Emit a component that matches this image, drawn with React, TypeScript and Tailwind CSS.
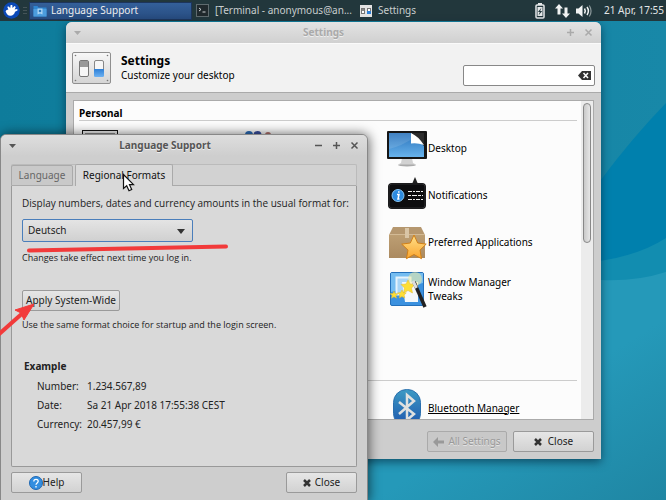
import React from 'react';
import { clsx } from 'clsx';

const example = [
    { label: 'Number:', value: '1.234.567,89' },
    { label: 'Date:', value: 'Sa 21 Apr 2018 17:55:38 CEST' },
    { label: 'Currency:', value: '20.457,99 €' },
];

const MouseLogo = () => (
    <svg viewBox="0 0 17 17" className="w-[17px] h-[17px]">
        <circle cx="8.5" cy="8.5" r="8.3" fill="#0b4ab8" />
        <path d="M2.6 9.5c.5-1.300 1.600-1.800 2.800-1.900L4.200 4.800l1.700-.4 1.300 1.900.4-3.300 1.700.1.200 3 2-2.200 1.300 1-1.200 2.600 2.700-.4.200 1.400-2.500 1.300c-.2 2.300-2.200 4-4.700 4-2.400 0-3.200-1.200-4.700-4.300z" fill="#fff" />
    </svg>
);

const FolderIcon = () => (
    <svg viewBox="0 0 14 12" className="w-3.5 h-3">
        <path d="M.5 1h4l1 1.500h8v9H.5z" fill="#2f86d0" />
        <path d="M.5 4h13v7.500H.5z" fill="#4c9ddd" />
        <path d="M4.500 3.500h5v6l-2.500-1-2.500 1z" fill="#a9d3f3" />
        <circle cx="7" cy="6" r="1.300" fill="#2b78bb" />
    </svg>
);

const TerminalIcon = () => (
    <svg viewBox="0 0 13 13" className="w-[13px] h-[13px]">
        <rect x=".5" y=".5" width="12" height="12" fill="#20292d" stroke="#5f6b6f" />
        <path d="M3 4l2 1.500L3 7M6.500 8h3" fill="none" stroke="#cfd4d6" />
    </svg>
);

const SmallSwitchesIcon = () => (
    <svg viewBox="0 0 12 12" className="w-3 h-3">
        <path d="M0 0h12v12H0z" fill="#e4e4e4" />
        <rect x="1.500" y="3.500" width="3" height="5" fill="#fff" stroke="#777" />
        <path d="M2 4h2v2H2z" fill="#888" />
        <rect x="7.500" y="3.500" width="3" height="5" fill="#fff" stroke="#777" />
        <path d="M7 6h4v3H7z" fill="#2f80d6" />
    </svg>
);

const SwitchesIcon = () => (
    <svg viewBox="0 0 39 32" className="h-8 w-[39px]">
        <defs>
            <linearGradient id="plate" x1="0" y1="0" x2="0" y2="1">
                <stop offset="0" stopColor="#f8f8f8" />
                <stop offset="1" stopColor="#d4d4d4" />
            </linearGradient>
            <linearGradient id="blueSwitch" x1="0" y1="0" x2="0" y2="1">
                <stop offset="0" stopColor="#2e7fd6" />
                <stop offset="1" stopColor="#6db2f2" />
            </linearGradient>
        </defs>
        <rect x=".5" y=".5" width="38" height="31" rx="1.500" fill="url(#plate)" stroke="#8f8f8f" />
        <g fill="#777">
            <circle cx="3.500" cy="3.500" r=".8" />
            <circle cx="35.500" cy="3.500" r=".8" />
            <circle cx="3.500" cy="28.500" r=".8" />
            <circle cx="35.500" cy="28.500" r=".8" />
        </g>
        <rect x="7.500" y="8.500" width="9" height="16" rx="1.500" fill="#f7f7f7" stroke="#777" />
        <path d="M8 9h8v6H8z" fill="#999" />
        <rect x="22.500" y="8.500" width="9" height="16" rx="1.500" fill="#f7f7f7" stroke="#888" />
        <path d="M22 17h10v6.500q0 1.500-1.500 1.500h-7q-1.500 0-1.500-1.500z" fill="url(#blueSwitch)" />
    </svg>
);

const BatteryIcon = () => (
    <svg viewBox="0 0 10 17" className="w-2.5 h-[17px]">
        <path d="M3 1h4v2H3z" fill="#e6e9ea" />
        <rect x="1" y="3" width="8" height="13" rx="1" fill="#22373c" stroke="#e6e9ea" strokeWidth="1.500" />
        <path d="M2.500 5h5v9h-5z" fill="#e6e9ea" />
        <path d="M6.500 5.500L3 10h1.800L3.500 13.500 7.200 9H5.200z" fill="#22373c" />
    </svg>
);

const NetworkIcon = () => (
    <svg viewBox="0 0 15 14" className="w-[15px] h-3.5">
        <path d="M4 0l4 4.500H5.500v6h-3v-6H0zM11 14l4-4.500h-2.500v-6h-3v6H7z" fill="#f1f3f3" />
    </svg>
);

const VolumeIcon = () => (
    <svg viewBox="0 0 16 14" className="w-4 h-3.5">
        <path d="M0 4.500h2.500L6.500 1v12L2.500 9.500H0z" fill="#f1f3f3" />
        <path d="M8.500 4.500q1.600 2.500 0 5M11 3q2.800 4 0 8" fill="none" stroke="#f1f3f3" strokeWidth="1.500" />
        <path d="M13.300 1.500q3.500 5.500 0 11" fill="none" stroke="#8b979a" strokeWidth="1.200" />
    </svg>
);

const DesktopIcon = () => (
    <svg viewBox="0 0 40 40" className="w-10 h-10">
        <defs>
            <linearGradient id="screen" x1="0" y1="0" x2="0" y2="1">
                <stop offset="0" stopColor="#2871ba" />
                <stop offset="1" stopColor="#68b3ec" />
            </linearGradient>
            <linearGradient id="fold" x1="1" y1="0" x2="0" y2="1">
                <stop offset="0" stopColor="#d0d0d0" />
                <stop offset=".5" stopColor="#fff" />
            </linearGradient>
        </defs>
        <ellipse cx="20" cy="37" rx="9" ry="1.500" fill="#aaa" />
        <path d="M15 30h10l1 5 3 1.500H11l3-1.500z" fill="#d2d2d2" />
        <rect x="0" y="3" width="40" height="28" rx="1" fill="#161616" />
        <path d="M2 5h22l13 13v11H2z" fill="url(#screen)" />
        <path d="M2 5h22l4 4Q15 18 2 21z" fill="#fff" opacity=".12" />
        <path d="M25 5h12v11z" fill="#2c2c2c" />
        <path d="M24 5Q31 8 37 17Q30 14.500 24 15.500z" fill="url(#fold)" />
    </svg>
);

const NotificationsIcon = () => (
    <svg viewBox="0 0 40 40" className="w-10 h-10">
        <path d="M25 9l3-7 3 7z" fill="#222" />
        <rect x="1" y="8" width="38" height="26" rx="4" fill="#0d0d0f" />
        <rect x="2" y="9" width="36" height="24" rx="3" fill="none" stroke="#2c2c2e" />
        <circle cx="11" cy="20.500" r="6" fill="#2d8be0" stroke="#8bc8f6" />
        <path d="M10 19.500h2l-1 4.500h1.500M11.800 16.300v1.400" fill="none" stroke="#fff" strokeWidth="1.500" />
        <g stroke="#f0f0f0">
            <path d="M21 16.500h15" strokeDasharray="4 1 2 1" />
            <path d="M21 20.500h15" strokeDasharray="3 1 5 1" />
            <path d="M21 24.500h15" strokeDasharray="4 1 2 1" />
        </g>
    </svg>
);

const PackageIcon = () => (
    <svg viewBox="0 0 40 40" className="w-10 h-10">
        <defs>
            <linearGradient id="star" x1="0" y1="0" x2="0" y2="1">
                <stop offset="0" stopColor="#ffe08a" />
                <stop offset="1" stopColor="#fba52e" />
            </linearGradient>
            <linearGradient id="box" x1="0" y1="0" x2="0" y2="1">
                <stop offset="0" stopColor="#bd9f74" />
                <stop offset="1" stopColor="#ab8a60" />
            </linearGradient>
        </defs>
        <path d="M6 5h28l4 8H2z" fill="#b5976f" />
        <path d="M2 12h36v24H2z" fill="url(#box)" />
        <path d="M2 12.500h36" stroke="#d3ba95" />
        <path d="M18 6h4v10h-4z" fill="#d9c5a6" />
        <path d="M27 13l3.700 8 8.500 1.100-6.200 6 1.500 8.600-7.500-4.200-7.600 4.200 1.600-8.600-6.300-6 8.600-1.100z" fill="url(#star)" stroke="#cf7f19" />
    </svg>
);

const TweaksIcon = () => (
    <svg viewBox="0 0 40 40" className="w-10 h-10">
        <rect x="3.500" y="3.500" width="33" height="33" rx="1.500" fill="#3b91df" stroke="#2470ba" />
        <path d="M4 4h32v10L4 23z" fill="#75bdf1" />
        <path d="M9.500 8.500h14v17h-14z" fill="#a9d5f6" stroke="#e6f3fc" strokeWidth="2" />
        <path d="M15 13h16v20H18z" fill="#f4f8fb" />
        <circle cx="28" cy="10" r="7" fill="#f7ee9a" opacity=".5" />
        <path d="M21 11l2 4 5 .5-3.500 3.500 1 5-4.500-2.500-4.500 2.500 1-5-3.500-3.500 5-.5zM7 22l1 2.500 3 .2-2.200 1.800.7 2.700L7 27.700l-2.500 1.500.7-2.700L3 24.700l3-.2zM15 21l1.300 2.500 3 .4-2.200 2 .6 3-2.700-1.400-2.700 1.400.6-3-2.200-2 3-.4z" fill="#fddf37" stroke="#e4b92a" strokeWidth=".5" />
        <path d="M27 13l11 25" stroke="#222" strokeWidth="3.500" />
        <path d="M26 12l3.500 7" stroke="#ddd" strokeWidth="3" />
    </svg>
);

const BluetoothIcon = () => (
    <svg viewBox="0 0 40 40" className="w-10 h-10">
        <defs>
            <linearGradient id="bt" x1="0" y1="0" x2="0" y2="1">
                <stop offset="0" stopColor="#3c9ac4" />
                <stop offset="1" stopColor="#1d55ad" />
            </linearGradient>
        </defs>
        <rect x="6.500" y="1.500" width="27" height="37" rx="13" fill="url(#bt)" stroke="#2a6fae" />
        <path d="M12 14l15 12-7 6V7l7 6-15 13" fill="none" stroke="#dfe1e0" strokeWidth="2.500" />
    </svg>
);

const AppearanceIcon = () => (
    <svg viewBox="0 0 40 40" className="w-10 h-10">
        <path d="M3 2h36v35H3z" fill="#111" />
        <path d="M4 3h34v33H4z" fill="#eee" />
        <path d="M6 5h30v29H6z" fill="#888" />
    </svg>
);

const PeopleIcon = () => (
    <svg viewBox="0 0 40 40" className="w-10 h-10">
        <circle cx="17" cy="7" r="4" fill="#2c6cb8" />
        <circle cx="25.500" cy="7" r="4" fill="#3a4fa0" />
        <circle cx="36" cy="7" r="3" fill="#b3736e" />
    </svg>
);

const items = [
    { name: 'Desktop', Icon: DesktopIcon },
    { name: 'Notifications', Icon: NotificationsIcon },
    { name: 'Preferred Applications', Icon: PackageIcon },
    { name: 'Window Manager Tweaks', Icon: TweaksIcon },
];

const MinimizeGlyph = () => (
    <svg viewBox="0 0 9 9" className="w-[9px] h-[9px]"><path d="M1 4.500h7" stroke="currentColor" strokeWidth="1.500" /></svg>
);
const MaximizeGlyph = () => (
    <svg viewBox="0 0 9 9" className="w-[9px] h-[9px]"><path d="M1 4.500h7M4.500 1v7" stroke="currentColor" strokeWidth="1.500" /></svg>
);
const CloseGlyph = () => (
    <svg viewBox="0 0 9 9" className="w-[9px] h-[9px]"><path d="M1.500 1.500l6 6M7.500 1.500l-6 6" stroke="currentColor" strokeWidth="1.500" /></svg>
);
const CrossIcon = () => (
    <svg viewBox="0 0 8 8" className="w-2 h-2"><path d="M1 1l6 6M7 1L1 7" stroke="#333" strokeWidth="2.500" /></svg>
);

interface TitleBarProps {
    title: string;
    active?: boolean;
}

const TitleBar: React.FC<TitleBarProps> = ({ title, active }) => (
    <div
        className={clsx(
            'flex h-[21px] shrink-0 items-center px-2 font-bold',
            active ? 'bg-linear-to-b from-[#dedede] to-[#cecece] text-[#555]' : 'bg-linear-to-b from-[#e3e3e3] to-[#d0d0d0] text-[#aaa]'
        )}
    >
        <button aria-label="Menu">
            <svg viewBox="0 0 7 4" className="h-1 w-[7px]"><path d="M0 0h7L3.500 4z" fill="currentColor" /></svg>
        </button>
        <span className="flex-1 text-center [text-shadow:0_1px_0_#eee]">{title}</span>
        <div className="flex gap-[9px]">
            {active && <button aria-label="Minimize"><MinimizeGlyph /></button>}
            <button aria-label="Maximize"><MaximizeGlyph /></button>
            <button aria-label="Close window"><CloseGlyph /></button>
        </div>
    </div>
);

const buttonStyle = 'flex h-[21px] items-center justify-center rounded-xs border border-[#9a9a9a] bg-linear-to-b from-[#e6e6e6] to-[#d2d2d2] text-[#222]';

const Panel = () => (
    <header className="flex h-[21px] items-center bg-[#22373c] text-[#c8cdce]">
        <button aria-label="Applications" className="ml-[3px]"><MouseLogo /></button>
        <div className="ml-[3px] flex w-1 flex-col gap-0.5">
            <i className="h-px bg-[#455458]" />
            <i className="h-px bg-[#455458]" />
            <i className="h-px bg-[#455458]" />
        </div>
        <button className="ml-[2px] flex h-[18px] w-[163px] items-center gap-1 border border-[#1d355c] bg-linear-to-b from-[#34609a] to-[#274c80] px-[3px] text-[#eee]">
            <FolderIcon />
            Language Support
        </button>
        <button className="ml-1 flex w-[164px] items-center gap-1.5">
            <TerminalIcon />
            [Terminal - anonymous@an...
        </button>
        <button className="flex items-center gap-1.5">
            <SmallSwitchesIcon />
            Settings
        </button>
        <div className="ml-auto flex items-center pr-[2px] text-[#e3e6e7]">
            <BatteryIcon />
            <span className="ml-2.5"><NetworkIcon /></span>
            <span className="ml-1.5"><VolumeIcon /></span>
            <time className="ml-3">21 Apr, 17:55</time>
        </div>
    </header>
);

const SettingsWindow = () => (
    <section className="absolute top-[22px] right-[65px] bottom-[41px] left-[66px] flex flex-col overflow-hidden rounded-t-md bg-[#cdcdcd] shadow-[0_3px_10px_rgba(0,30,50,0.6)]">
        <TitleBar title="Settings" />
        <div className="flex h-[50px] shrink-0 items-center border-y border-t-[#fafafa] border-b-[#aaa] bg-[#f2f2f2] px-1.5">
            <SwitchesIcon />
            <div className="ml-2.5 leading-[15px] text-black">
                <h1 className="text-xs leading-[15px] font-bold">Settings</h1>
                <p>Customize your desktop</p>
            </div>
            <div className="relative ml-auto self-end pb-1.5">
                <input aria-label="Search" className="block h-[21px] w-[132px] rounded-xs border border-[#888] bg-white px-1 pr-5 outline-none" />
                <button aria-label="Clear" className="absolute top-1.5 right-1">
                    <svg viewBox="0 0 13 9" className="h-[9px] w-[13px]">
                        <path d="M4 0h9v9H4L0 4.500z" fill="#333" />
                        <path d="M5.500 2l4.500 5M10 2L5.500 7" stroke="#fff" strokeWidth="1.500" />
                    </svg>
                </button>
            </div>
        </div>
        <div className="mx-[7px] mt-[7px] flex min-h-0 flex-1 border border-[#aaa] bg-[#fcfcfc] text-black">
            <div className="min-w-0 flex-1 overflow-hidden pr-1 pl-[5px]">
                <h2 className="h-[20px] border-b border-[#ccc] leading-6 font-bold">Personal</h2>
                <div className="mt-[7px] grid h-[252px] grid-cols-[153px_153px_1fr]">
                    <div><AppearanceIcon /></div>
                    <div><PeopleIcon /></div>
                    <ul className="flex flex-col gap-[7px] pl-[2px]">
                        {items.map(({ name, Icon }) => (
                            <li key={name}>
                                <a href="#" className="flex h-10 items-center gap-px">
                                    <Icon />
                                    <span className="w-28 leading-[14px] whitespace-normal">{name}</span>
                                </a>
                            </li>
                        ))}
                    </ul>
                </div>
                <div className="grid grid-cols-[306px_1fr] border-t border-[#ccc] pt-[7px]">
                    <div />
                    <a href="#" className="flex items-center gap-px pl-[2px] underline">
                        <BluetoothIcon />
                        Bluetooth Manager
                    </a>
                </div>
            </div>
            <div className="w-3 bg-[#ececec] px-[2px] pt-[2px]">
                <div className="h-[140px] w-2 rounded-full border border-[#888] bg-linear-to-r from-[#c9c9c9] to-[#e6e6e6]" />
            </div>
        </div>
        <footer className="flex h-[39px] shrink-0 items-center justify-end gap-1.5 px-[7px] pt-1">
            <button disabled className="flex h-[21px] w-20 items-center justify-center gap-1 rounded-xs border border-[#aaa] bg-[#c8c8c8] text-[#999] [text-shadow:0_1px_0_#e4e4e4]">
                <svg viewBox="0 0 11 10" className="h-2.5 w-[11px]"><path d="M5 0v3.500h6v3H5V10L0 5z" fill="#999" /></svg>
                All Settings
            </button>
            <button className={clsx(buttonStyle, 'w-[81px] gap-1.5')}>
                <CrossIcon />
                Close
            </button>
        </footer>
    </section>
);

const LanguageDialog = () => (
    <section className="absolute top-[134px] left-0 flex h-[368px] w-[368px] flex-col overflow-hidden rounded-t-md border border-[#888] bg-[#cecece] text-[#222] shadow-[1px_0_12px_rgba(0,0,0,0.6)]">
        <TitleBar title="Language Support" active />
        <div className="mx-2.5 mt-2 flex min-h-0 flex-1 flex-col">
            <div role="tablist" className="flex h-[22px] shrink-0 items-end gap-0.5 rounded-t-xs border border-b-0 border-[#bbb] bg-[#d2d2d2]">
                <button role="tab" aria-selected="false" className="-ml-px h-[21px] w-[62px] rounded-t-xs border border-[#aaa] bg-[#c9c9c9] text-[#666]">Language</button>
                <button role="tab" aria-selected="true" className="h-[22px] w-[98px] rounded-t-xs border border-b-0 border-[#aaa] bg-[#d9d9d9] text-[#111]">Regional Formats</button>
                <div className="-ml-0.5 h-px flex-1 bg-[#aaa]" />
            </div>
            <div className="flex-1 rounded-b-xs border border-t-0 border-[#999] bg-[#d9d9d9] px-2.5">
                <label htmlFor="format" className="block pt-[9px] font-['Open_Sans','Noto_Sans',sans-serif] leading-4">
                    Display numbers, dates and currency amounts in the usual format for:
                </label>
                <div className="relative mt-2 w-[171px]">
                    <select id="format" defaultValue="Deutsch" className="block h-[23px] w-full appearance-none rounded-xs border border-[#4a7ebb] bg-linear-to-b from-[#e4e4e4] to-[#d0d0d0] px-[5px] outline-none">
                        <option>Deutsch</option>
                    </select>
                    <svg viewBox="0 0 8 5" className="pointer-events-none absolute top-2.5 right-2 h-[5px] w-2"><path d="M0 0h8L4 5z" fill="#333" /></svg>
                </div>
                <p className="mt-2 font-['Open_Sans','Noto_Sans',sans-serif] text-[9px] leading-4">Changes take effect next time you log in.</p>
                <button className={clsx(buttonStyle, 'mt-6 w-[98px]')}>Apply System-Wide</button>
                <p className="mt-1.5 font-['Open_Sans','Noto_Sans',sans-serif] text-[9px] leading-4">Use the same format choice for startup and the login screen.</p>
                <h2 className="mt-[25px] pl-0.5 leading-4 font-bold">Example</h2>
                <table className="mt-[3px] ml-[15px]">
                    <tbody>
                        {example.map((row) => (
                            <tr key={row.label} className="h-[19px]">
                                <th scope="row" className="w-[50px] p-0 text-left font-normal">{row.label}</th>
                                <td className="p-0">{row.value}</td>
                            </tr>
                        ))}
                    </tbody>
                </table>
            </div>
        </div>
        <div className="mx-2.5 mt-[5px] mb-2 flex shrink-0 justify-between">
            <button className={clsx(buttonStyle, 'w-[71px]')}>
                <svg viewBox="0 0 14 14" className="h-3.5 w-3.5">
                    <circle cx="7" cy="7" r="6.500" fill="#338ee0" stroke="#1f67b2" />
                    <path d="M4.800 5.500c0-3 4.500-2.700 4.400-.2C9.200 6.800 7 7 7 8.700M7 10v1.500" fill="none" stroke="#fff" strokeWidth="1.300" />
                </svg>
                Help
            </button>
            <button className={clsx(buttonStyle, 'w-[71px] gap-1')}>
                <CrossIcon />
                Close
            </button>
        </div>
    </section>
);

const Annotations = () => (
    <svg viewBox="0 0 240 350" className="pointer-events-none absolute top-0 left-0 h-[350px] w-60">
        <path d="M29 250.500Q120 249 226 246.500" fill="none" stroke="#f23a3a" strokeWidth="4" strokeLinecap="round" />
        <path d="M-2 335L25 311" stroke="#f23a3a" strokeWidth="4" />
        <path d="M34 304L15 310l6 3 3 7z" fill="#f23a3a" stroke="#f23a3a" />
        <path d="M123.500 174.500v14l3.200-2.800 2.300 5 2.700-1.200-2.200-4.800h4z" fill="#fff" stroke="#111" strokeWidth="1.200" />
    </svg>
);

export default function App() {
    return (
        <main className="relative h-screen overflow-hidden bg-[#1487a6] font-['Noto_Sans','Open_Sans',sans-serif] text-[10px] whitespace-nowrap">
            <svg viewBox="0 0 666 500" preserveAspectRatio="none" className="absolute inset-0 h-full w-full">
                <defs>
                    <linearGradient id="sky" x1="0" y1="0" x2="1" y2="0">
                        <stop offset="0" stopColor="#0e7c9b" />
                        <stop offset="1" stopColor="#1888a8" />
                    </linearGradient>
                    <linearGradient id="ground" x1="0" y1="0" x2="1" y2="1">
                        <stop offset=".6" stopColor="#2599b9" />
                        <stop offset="1" stopColor="#1f86a3" />
                    </linearGradient>
                </defs>
                <path d="M0 0h666v500H0z" fill="url(#sky)" />
                <path d="M666 103Q632 138 600 181v80h66z" fill="#0080ad" />
                <path d="M600 261Q640 255 666 238v50h-66z" fill="#128db0" />
                <path d="M300 280h300q35 2 66-8v228H300z" fill="url(#ground)" />
            </svg>
            <div className="relative h-full">
                <Panel />
                <SettingsWindow />
                <LanguageDialog />
                <Annotations />
            </div>
        </main>
    );
}
